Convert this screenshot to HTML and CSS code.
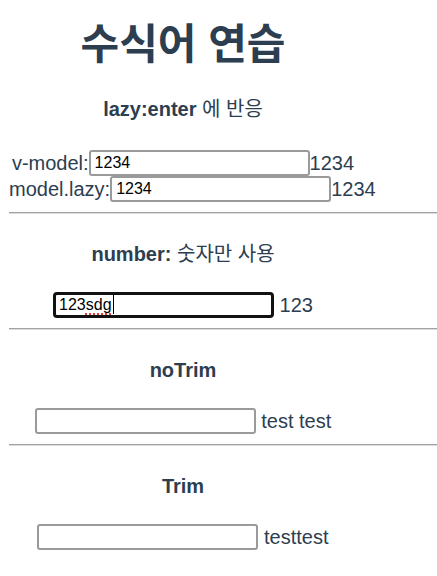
FILE: index.html
```html
<!DOCTYPE html>
<html lang="ko">
<head>
  <meta charset="UTF-8">
  <title>수식어 연습</title>
  <link rel="stylesheet" href="styles.css">
</head>
<body>

  <div class="app">
    <h1 class="title">수식어 연습</h1>

    <div class="block">
      <h4 class="block-title">lazy:enter <span class="ko">에 반응</span></h4>
      <div class="field-group">
        <div class="field">v-model:<input class="text-input" type="text" value="1234">1234</div>
        <div class="field">model.lazy:<input class="text-input" type="text" value="1234">1234</div>
      </div>
    </div>
    <hr class="divider">

    <div class="block">
      <h4 class="block-title">number: <span class="ko">숫자만 사용</span></h4>
      <div class="field">
        <span class="text-input is-focused">123<span class="typo">sdg</span><span class="caret"></span></span> 123
      </div>
    </div>
    <hr class="divider">

    <div class="block">
      <h4 class="block-title">noTrim</h4>
      <div class="field"><input class="text-input" type="text" value=""> test test</div>
    </div>
    <hr class="divider">

    <div class="block">
      <h4 class="block-title">Trim</h4>
      <div class="field"><input class="text-input" type="text" value=""> testtest</div>
    </div>
  </div>

</body>
</html>
```

FILE: styles.css
```css
body {
  margin: 0;
  background: #fff;
  color: #2c3e50;
  font-family: "Liberation Sans", "Noto Sans CJK KR", sans-serif;
}

.app {
  padding-left: 9px;
}

.title, .block {
  width: 348px;
  text-align: center;
}

.title {
  margin: 21px 0 0;
  font-size: 42px;
  line-height: 48px;
  font-weight: bold;
}

.block-title {
  margin: 28px 0 0;
  font-size: 20px;
  line-height: 24px;
  font-weight: bold;
}

.ko {
  font-weight: normal;
}

.field-group {
  margin-top: 29px;
}

.field {
  height: 26px;
  margin-top: 26px;
  font-size: 20px;
  line-height: 26px;
  white-space: nowrap;
}

.field-group .field {
  margin-top: 0;
}

.text-input {
  display: inline-block;
  box-sizing: border-box;
  width: 221px;
  height: 26px;
  margin: 0;
  padding: 0 4px;
  border: 2px solid #9a9a9a;
  border-radius: 3px;
  background: #fff;
  color: #000;
  font-family: "Liberation Sans", sans-serif;
  font-size: 16px;
  line-height: 22px;
  text-align: left;
  vertical-align: top;
}

.is-focused {
  padding: 0 3px;
  border: 3px solid #111;
  border-radius: 4px;
  line-height: 20px;
}

.typo {
  text-decoration: underline dotted #e53935;
  text-decoration-thickness: 2px;
  text-underline-offset: 3px;
}

.caret {
  display: inline-block;
  width: 1px;
  height: 19px;
  margin-left: 1px;
  background: #000;
  vertical-align: -4px;
}

.divider {
  height: 0;
  margin: 10px 0 0;
  border: 0;
  border-top: 1px solid #a2a2a2;
  border-bottom: 1px solid #dcdcdc;
}
```
